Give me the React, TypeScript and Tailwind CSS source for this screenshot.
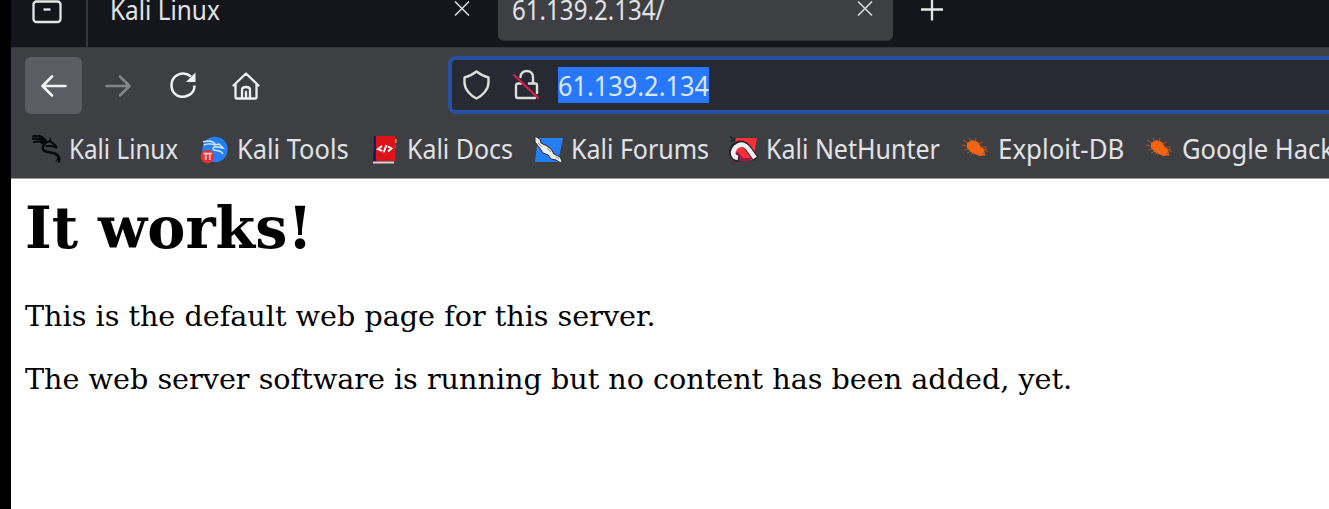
import type { ReactNode } from "react";

function Bookmark({ icon, label, box, scale }: { icon: ReactNode; label: string; box: string; scale: string }) {
  return (
    <div className={`flex h-full shrink-0 items-center gap-[7px] ${box}`}>
      <span className="w-[30px] shrink-0">{icon}</span>
      <span className={`mt-[-2px] origin-left whitespace-nowrap text-[26.500px] leading-[36px] ${scale}`}>{label}</span>
    </div>
  );
}

const Dragon = () => (
  <svg width="30" height="30" viewBox="0 0 30 30" fill="none" stroke="#08090b" strokeLinecap="round" strokeLinejoin="round">
    <path d="M1 1.500C6 0 11 1.500 14 6M1 4c5-1 8 0 11 3M2 7c4-1 6-1 8 1M8 3c3 1 5 2.500 6 4.500" strokeWidth="2.200" />
    <path d="M13 8c-2.500 3-3 5-1.500 7 2 3 10 2 13 4.500 3 2 3.500 4 2.500 7" strokeWidth="2.500" />
    <path d="m13 8 5-2 5 4 1.500 2.500-5-1.500-5 0" strokeWidth="2.200" />
    <path d="m18 3 1 3.500M24 20l3.500 2m-1.500 1-2 3.500" strokeWidth="1.200" />
  </svg>
);

const Tools = () => (
  <svg width="30" height="30" viewBox="0 0 30 30" fill="none">
    <circle cx="15" cy="14.500" r="12.700" fill="#2680f5" />
    <path d="M3 7c6-2 10-1 13 3M4 10c4-2 8-1 11 0l4-1 4 4-5-1c-5-1-6 2-4 3s7 0 9 4" stroke="#d6e8fc" strokeWidth="1.400" />
    <circle cx="7.500" cy="21.500" r="6.700" fill="#ed3037" />
    <path d="M3.500 18.500h8.500M5.700 18.500v6.500M9.800 18.500v6.500" stroke="#ffd9d9" strokeWidth="1.700" />
  </svg>
);

const Docs = () => (
  <svg width="30" height="30" viewBox="0 0 30 30" fill="none">
    <path d="M4 1h4v26H3Z" fill="#151e4d" />
    <path d="M24 2h2v23h-2Z" fill="#7b303e" />
    <path d="M25 4h1.500v4H25Z" fill="#ee9640" />
    <path d="M25 10h1v3h-1Z" fill="#258949" />
    <path d="M6 1h19v25H6Z" fill="#de1219" />
    <path d="M3 26.500h21v2H3Z" fill="#ddd3d5" />
    <path d="m12 11-4 3 4 2m4.500-6-3 7.500m4.500-6 3.500 2-3.500 3" stroke="#fff" strokeWidth="2" />
  </svg>
);

const Forums = () => (
  <svg width="30" height="30" viewBox="0 0 30 30" fill="none">
    <path d="M4 3h25l-5 24H1Z" fill="#247ef4" />
    <path d="m1 1 3 2 2 1 1 4 6 3 4 3 3 5 6 3 2 4-1 2-5-3-5-1-3-4-5-2-4-6-4-5Z" fill="#eee" stroke="#292a2d" strokeWidth="1" />
    <path d="m4 8 4 4m5 1 4 4m5 5 3 2" stroke="#8d9198" />
  </svg>
);

const NetHunter = () => (
  <svg width="30" height="30" viewBox="0 0 30 30" fill="none">
    <path d="m7 3 21 0-4 22H2l3-13Z" fill="#f92f3a" />
    <path d="M2 19 9 17l5 6h9l-3 3H3Z" fill="#a51541" />
    <path d="M10 24C3 23 1 16 6 11c6-5 12-1 15 5l6 8" stroke="#242327" strokeWidth="6.500" />
    <path d="M9 23C3 22 3 16 7 12c6-5 11-1 14 4l5 7" stroke="#f1efef" strokeWidth="4.600" />
    <path d="m1 1 5 5m-4 1 4-4" stroke="#202025" strokeWidth="1.500" />
  </svg>
);

const Bug = () => (
  <svg width="30" height="30" viewBox="0 0 30 30" fill="none">
    <path d="m6 8 5-3 6 2 3 5 3 2 1 6-5 1-8-3-5-5Z" fill="#f36413" />
    <path d="m9 6-1-3m6 4 1-4m2 6 5-2m-3 5 7 0m-4 3 4-1m-5 4 4 2M7 8 2 5m4 6-5-1m6 4-4 1m7 1-4 2m7-1-3 3m7-2v3m5-4 2 4m0-6 3 2" stroke="#b95625" strokeWidth="0.900" />
  </svg>
);

const TabClose = () => (
  <svg className="shrink-0" width="16" height="18" viewBox="0 0 16 18" stroke="#d5d6d9" strokeWidth="1.700"><path d="m1 1.500 14 14m0-14-14 14" /></svg>
);

export default function App() {
  return (
    <div className="flex h-[509px] w-[1329px] overflow-hidden bg-black font-['Noto_Sans',sans-serif] text-[#e2e3e6]">
      <div className="ml-[11px] flex w-[1318px] flex-col bg-white">
        <header className="flex h-[48px] shrink-0 border-b border-[#35363a] bg-[#15161b]">
          <div className="h-full w-[77px] shrink-0 border-r-2 border-[#36373c] pl-[21px]">
            <svg width="31" height="24" viewBox="0 0 31 24" fill="none" stroke="#e6e6e6" strokeWidth="2.300">
              <rect x="1.500" y="1.500" width="27" height="20.500" rx="3" />
              <path d="M11.500 9.500h7" />
            </svg>
          </div>
          <div className="flex h-full w-[399px] shrink-0 pl-[22px]">
            <span className="mt-[-8px] h-[36px] w-[344px] shrink-0 origin-left scale-x-[0.920] whitespace-nowrap text-[26.500px] leading-[36px]">Kali Linux</span>
            <TabClose />
          </div>
          <div className="ml-[11px] flex h-[41px] w-[395px] shrink-0 rounded-b-md border-b border-[#303136] bg-[#3e3f43] pl-[14px]">
            <span className="mt-[-8px] h-[36px] w-[345px] shrink-0 origin-left scale-x-[0.910] whitespace-nowrap text-[26.500px] leading-[36px]">61.139.2.134/</span>
            <TabClose />
          </div>
          <svg className="ml-[28px]" width="22" height="22" viewBox="0 0 22 22" stroke="#e6e6e6" strokeWidth="2.300"><path d="M0 9.5h22M11-2v22.5" /></svg>
        </header>
        <nav className="flex h-[74px] shrink-0 bg-[#3e3f43] pl-[14px]">
          <div className="mt-[9px] flex h-[57px] w-[57px] shrink-0 items-center justify-center rounded-md bg-[#5c5d62]">
            <svg width="26" height="24" viewBox="0 0 26 24" fill="none" stroke="#f1f1f1" strokeWidth="2.700" strokeLinecap="round" strokeLinejoin="round"><path d="M24.500 12h-23M11 2.500 1.500 12l9.500 9.500" /></svg>
          </div>
          <div className="flex h-[75px] w-[366px] shrink-0 items-center pl-[23px]">
            <svg width="26" height="24" viewBox="0 0 26 24" fill="none" stroke="#85868a" strokeWidth="2.500" strokeLinecap="round" strokeLinejoin="round"><path d="M1.500 12h23M15 2.500l9.500 9.500-9.500 9.500" /></svg>
            <svg className="ml-[38px] mt-[-2px]" width="28" height="28" viewBox="0 0 28 28" fill="none"><path d="M22 5.500C14-1 2.500 4 2.500 14s9 14 16.500 10.500c5-2 6.500-6 6.500-10" stroke="#f1f1f1" strokeWidth="2.500" /><path d="M26.500 1.500v9.500H17Z" fill="#f1f1f1" /></svg>
            <svg className="ml-[35px]" width="28" height="28" viewBox="0 0 28 28" fill="none" stroke="#eee" strokeWidth="2.300" strokeLinejoin="round" strokeLinecap="round"><path d="M1.500 13.500 14 1.500l12.500 12M3.500 12v13q0 1.500 1.500 1.500h18q1.500 0 1.500-1.500V12M10 26v-8q0-3 4-3t4 3v8m-4 0v-6" /></svg>
          </div>
          <div className="mt-[8px] flex h-[58px] flex-1 items-center rounded-l-lg border-4 border-r-0 border-[#2850a0] bg-[#272933] pl-[10px]">
            <svg width="28" height="30" viewBox="0 0 28 30" fill="none" stroke="#deded9" strokeWidth="2.400" strokeLinejoin="round"><path d="M14.500 1.500c4 3 7.500 5 12 6v5c0 7-6 13-12 16-6-3-12-9-12-16v-5c4.500-1 8-3 12-6Z" /></svg>
            <svg className="ml-[22px]" width="28" height="32" viewBox="0 0 28 32" fill="none" strokeLinecap="round"><g stroke="#deded9" strokeWidth="2.400"><path d="M8.500 8c0-8 12.500-8 12.500 0v6.500M9 14.500H6q-2 0-2 2V27q0 2 2 2h17m-6-14.500h6q2 0 2 2V24" /></g><path d="m2 6 24 23" stroke="#d3204f" strokeWidth="2.300" /></svg>
            <div className="ml-[18px] h-[36px] w-[151px] bg-[#2878ff]">
              <span className="block origin-left scale-x-[0.957] whitespace-nowrap pt-px text-[26.500px] leading-[36px] text-[#dbe7ff]">61.139.2.134</span>
            </div>
          </div>
        </nav>
        <div className="flex h-[57px] shrink-0 overflow-hidden border-b border-[#9b9ca0] bg-[#3e3f43] pl-[21px]">
          <Bookmark icon={<Dragon />} label="Kali Linux" box="w-[168px]" scale="scale-x-[0.915]" />
          <Bookmark icon={<Tools />} label="Kali Tools" box="w-[170px]" scale="scale-x-[0.960]" />
          <Bookmark icon={<Docs />} label="Kali Docs" box="w-[164px]" scale="scale-x-[0.940]" />
          <Bookmark icon={<Forums />} label="Kali Forums" box="w-[195px]" scale="scale-x-[0.943]" />
          <Bookmark icon={<NetHunter />} label="Kali NetHunter" box="w-[232px]" scale="scale-x-[0.943]" />
          <Bookmark icon={<Bug />} label="Exploit-DB" box="w-[184px]" scale="scale-x-[0.976]" />
          <Bookmark icon={<Bug />} label="Google Hack" box="w-[280px]" scale="scale-x-[0.963]" />
        </div>
        <main className="pl-[14px] font-['DejaVu_Serif',serif] text-black">
          <h1 className="mt-[15px] whitespace-nowrap text-[57.200px] font-bold leading-[68px]">It works!</h1>
          <p className="mt-[37px] whitespace-nowrap text-[28.630px] leading-[34px]">This is the default web page for this server.</p>
          <p className="mt-[29px] whitespace-nowrap text-[28.630px] leading-[34px]">The web server software is running but no content has been added, yet.</p>
        </main>
      </div>
    </div>
  );
}
